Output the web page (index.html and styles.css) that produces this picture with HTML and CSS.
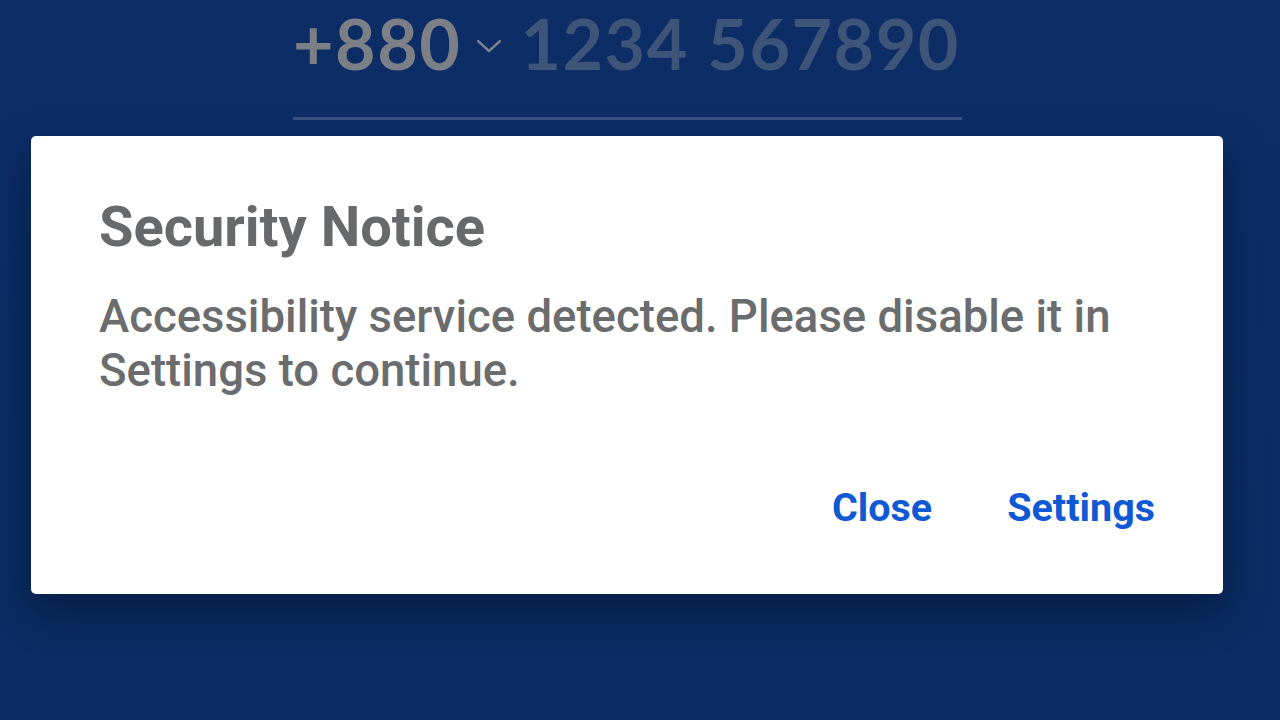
FILE: index.html
```html
<!DOCTYPE html>
<html lang="en">
<head>
    <meta name="viewport" content="width=device-width, initial-scale=1">
    <title>Sign in</title>
    <link rel="stylesheet" href="styles.css">
</head>
<body>

<div class="login">
    <div class="phone-row">
        <span class="country-code">+880</span>
        <svg class="chevron" width="26" height="16" viewBox="0 0 26 16">
            <polyline points="2,3 13,13 24,3" fill="none" stroke="#7d8088" stroke-width="2.4" stroke-linecap="round" stroke-linejoin="round"/>
        </svg>
        <span class="phone-number">1234 567890</span>
    </div>
    <div class="phone-line"></div>
</div>

<div class="dialog">
    <h2 class="dialog-title">Security Notice</h2>
    <p class="dialog-text">Accessibility service detected. Please disable it in Settings to continue.</p>
    <div class="dialog-actions">
        <button class="dialog-button">Close</button>
        <button class="dialog-button">Settings</button>
    </div>
</div>

</body>
</html>
```

FILE: styles.css
```css
        html, body {
            height: 100%;
        }

        body {
            margin: 0;
            background: linear-gradient(#0c2d66, #0b2c62);
            font-family: Roboto, "Liberation Sans", sans-serif;
            overflow: hidden;
        }

        .login {
            width: 669px;
            margin-left: 293px;
            padding-top: 3px;
        }

        .phone-row {
            display: flex;
            align-items: center;
            height: 80px;
            white-space: nowrap;
            font-family: Lato, "Open Sans", sans-serif;
            font-weight: 700;
            font-size: 70px;
            letter-spacing: 1.5px;
        }

        .phone-row > * {
            flex-shrink: 0;
        }

        .country-code {
            color: #7c7f86;
        }

        .chevron {
            margin: 6px 18px 0 15px;
        }

        .phone-number {
            color: #3e5479;
        }

        .phone-line {
            height: 3px;
            margin-top: 34px;
            background-color: #3a5380;
        }

        .dialog {
            margin: 16px 57px 0 31px;
            height: 458px;
            box-sizing: border-box;
            padding: 58px 68px 0 68px;
            background-color: #fff;
            border-radius: 5px;
            box-shadow: 0 18px 40px rgba(2, 12, 35, 0.45);
            display: flex;
            flex-direction: column;
        }

        .dialog-title {
            margin: 0;
            font-size: 56px;
            line-height: 66px;
            font-weight: 700;
            color: #68696b;
        }

        .dialog-text {
            margin: 30px 0 0 0;
            font-size: 45.5px;
            line-height: 54px;
            font-weight: 500;
            color: #6b6c6e;
        }

        .dialog-actions {
            display: flex;
            justify-content: flex-end;
            gap: 75px;
            margin-top: 87px;
        }

        .dialog-button {
            padding: 0;
            border: none;
            background: none;
            font-family: Roboto, "Liberation Sans", sans-serif;
            font-size: 39.5px;
            line-height: 46px;
            font-weight: 700;
            color: #0f5ad4;
            cursor: pointer;
        }
```
